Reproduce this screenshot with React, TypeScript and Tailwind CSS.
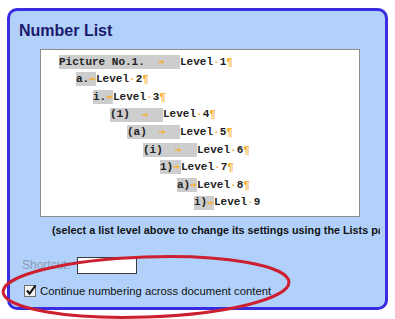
import React from 'react'

type Row = {
    label: string
    indent: string
    hl: string
    spread: boolean
    n: number
    last?: boolean
}

const rows: Row[] = [
    { label: 'Picture No.1.', indent: 'pl-[0px]', hl: 'w-[121px]', spread: true, n: 1 },
    { label: 'a.', indent: 'pl-[17px]', hl: 'w-[20px]', spread: false, n: 2 },
    { label: 'i.', indent: 'pl-[34px]', hl: 'w-[20px]', spread: false, n: 3 },
    { label: '(1)', indent: 'pl-[51px]', hl: 'w-[53px]', spread: true, n: 4 },
    { label: '(a)', indent: 'pl-[68px]', hl: 'w-[53px]', spread: true, n: 5 },
    { label: '(i)', indent: 'pl-[84px]', hl: 'w-[54px]', spread: true, n: 6 },
    { label: '1)', indent: 'pl-[101px]', hl: 'w-[21px]', spread: false, n: 7 },
    { label: 'a)', indent: 'pl-[118px]', hl: 'w-[20px]', spread: false, n: 8 },
    { label: 'i)', indent: 'pl-[135px]', hl: 'w-[20px]', spread: false, n: 9, last: true },
]

function TabArrow() {
    return (
        <svg width="7" height="6" viewBox="0 0 7 6" className="shrink-0">
            <path d="M0 3 H5" stroke="#f2b040" strokeWidth="1.4" />
            <path d="M3.5 0.8 L6.5 3 L3.5 5.2 Z" fill="#f2b040" />
        </svg>
    )
}

function ListRow({ row }: { row: Row }) {
    return (
        <div className={`flex items-center h-[17.6px] ${row.indent}`}>
            <span className={`flex items-center h-[14px] bg-[#cdcdcd] ${row.hl}`}>
                <span className="whitespace-pre">{row.label}</span>
                {row.spread ? (
                    <span className="flex-1 flex justify-center pr-[2px]">
                        <TabArrow />
                    </span>
                ) : (
                    <TabArrow />
                )}
            </span>
            <span>Level</span>
            <span className="text-[#f2b040]">·</span>
            <span>{row.n}</span>
            {!row.last && <span className="text-[#f5b030] font-bold">¶</span>}
        </div>
    )
}

export default function App() {
    return (
        <div className="relative w-[395px] h-[319px] bg-white overflow-hidden font-['Liberation_Sans',sans-serif]">
            <div className="ml-[7px] mt-[8px] w-[381px] h-[302px] rounded-[10px] border-[3px] border-[#3a2ce0] bg-[#b2d1fa] overflow-hidden flex flex-col">
                <h1 className="ml-[9px] mt-[10px] h-[20px] leading-[20px] text-[16px] font-bold text-[#1c1a6c]">
                    Number List
                </h1>

                {/* list preview */}
                <div className="ml-[30px] mt-[8px] w-[320px] h-[168px] bg-white border border-[#8c8c8c] pt-[3px] pl-[18px] text-[11px] font-bold text-[#222] font-['Liberation_Mono',monospace]">
                    {rows.map((row) => (
                        <ListRow key={row.n} row={row} />
                    ))}
                </div>

                <div className="ml-[42px] mt-[6px] w-[328px] overflow-hidden whitespace-nowrap text-[10.8px] leading-[14px] font-bold text-[#111]">
                    (select a list level above to change its settings using the Lists pa
                </div>

                <div className="ml-[12px] mt-[19px] flex items-center gap-[7px]">
                    <span className="text-[12px] text-[#8a9bb4]">Shortcut:</span>
                    <div className="w-[60px] h-[17px] bg-white border border-[#3a3a3a]" />
                </div>

                <div className="ml-[14px] mt-[9px] flex items-center gap-[4px]">
                    <div className="w-[12px] h-[12px] bg-[#f4f4f4] border border-[#6d6d6d] relative">
                        <svg width="12" height="12" viewBox="0 0 12 12" className="absolute -top-[2px] left-[0px]">
                            <path d="M2 6.5 L4.6 9.6 L10.5 1.5" stroke="#111" strokeWidth="2.1" fill="none" />
                        </svg>
                    </div>
                    <span className="text-[11.3px] text-[#111]">Continue numbering across document content</span>
                </div>
            </div>

            {/* red annotation ellipse */}
            <svg width="395" height="319" className="absolute left-0 top-0 pointer-events-none">
                <ellipse cx="146" cy="287" rx="143" ry="30" transform="rotate(-2 146 287)" fill="none" stroke="#cc2030" strokeWidth="3" />
            </svg>
        </div>
    )
}
